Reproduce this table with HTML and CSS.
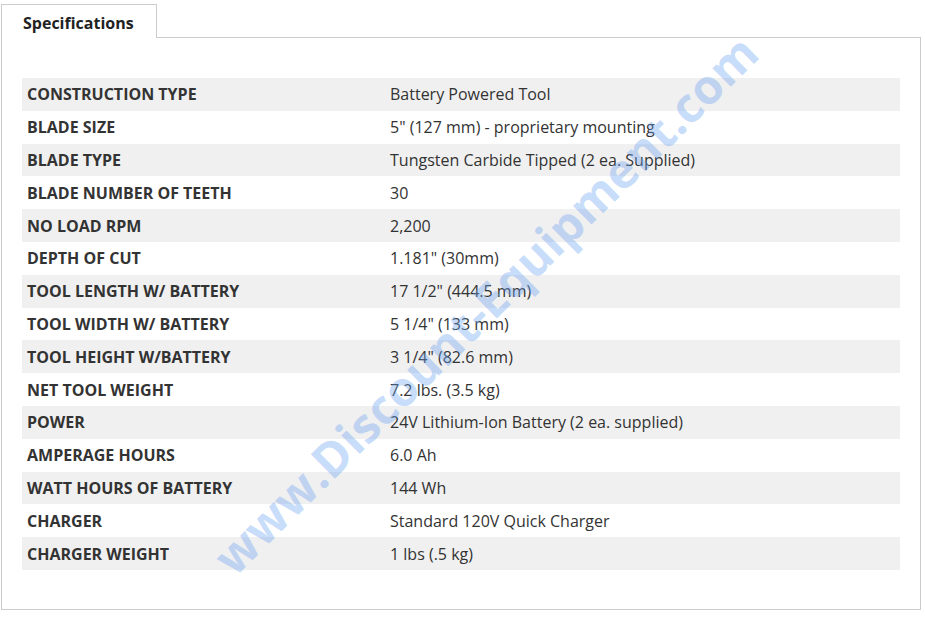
FILE: index.html
```html
<!DOCTYPE html>
<html>
<head>
<meta charset="utf-8">
<link rel="stylesheet" href="styles.css">
</head>
<body>
<div class="wrap">
  <div class="tab">Specifications</div>
  <div class="panel">
    <table class="specs">
      <tr><td class="k">CONSTRUCTION TYPE</td><td class="v">Battery Powered Tool</td></tr>
      <tr><td class="k">BLADE SIZE</td><td class="v">5" (127 mm) - proprietary mounting</td></tr>
      <tr><td class="k">BLADE TYPE</td><td class="v">Tungsten Carbide Tipped (2 ea. Supplied)</td></tr>
      <tr><td class="k">BLADE NUMBER OF TEETH</td><td class="v">30</td></tr>
      <tr><td class="k">NO LOAD RPM</td><td class="v">2,200</td></tr>
      <tr><td class="k">DEPTH OF CUT</td><td class="v">1.181" (30mm)</td></tr>
      <tr><td class="k">TOOL LENGTH W/ BATTERY</td><td class="v">17 1/2" (444.5 mm)</td></tr>
      <tr><td class="k">TOOL WIDTH W/ BATTERY</td><td class="v">5 1/4" (133 mm)</td></tr>
      <tr><td class="k">TOOL HEIGHT W/BATTERY</td><td class="v">3 1/4" (82.6 mm)</td></tr>
      <tr><td class="k">NET TOOL WEIGHT</td><td class="v">7.2 lbs. (3.5 kg)</td></tr>
      <tr><td class="k">POWER</td><td class="v">24V Lithium-Ion Battery (2 ea. supplied)</td></tr>
      <tr><td class="k">AMPERAGE HOURS</td><td class="v">6.0 Ah</td></tr>
      <tr><td class="k">WATT HOURS OF BATTERY</td><td class="v">144 Wh</td></tr>
      <tr><td class="k">CHARGER</td><td class="v">Standard 120V Quick Charger</td></tr>
      <tr><td class="k">CHARGER WEIGHT</td><td class="v">1 lbs (.5 kg)</td></tr>
    </table>
  </div>
  <div class="watermark">www.Discount-Equipment.com</div>
</div>
</body>
</html>
```
FILE: styles.css
```css
html, body {
  margin: 0;
  padding: 0;
  background: #fff;
}
body {
  font-family: "Open Sans", "Liberation Sans", sans-serif;
  color: #333;
}
.wrap {
  position: relative;
  width: 925px;
  height: 617px;
  padding-top: 4px;
  box-sizing: border-box;
}
.tab {
  position: relative;
  z-index: 1;
  margin-left: 1px;
  width: 133px;
  height: 32px;
  border: 1px solid #ccc;
  border-bottom: none;
  background: #fff;
  font-weight: 700;
  font-size: 16px;
  line-height: 36px;
  padding-left: 21px;
  padding-bottom: 1px;
  margin-bottom: -1px;
  box-sizing: content-box;
  color: #222;
}
.panel {
  margin-left: 1px;
  width: 920px;
  border: 1px solid #ccc;
  padding: 40px 0 39px 20px;
  box-sizing: border-box;
}
.specs {
  width: 878px;
  border-collapse: collapse;
  font-size: 16px;
}
.specs td {
  height: 32.8px;
  padding: 0 5px;
  vertical-align: middle;
  line-height: 20px;
}
.specs tr:nth-child(odd) td {
  background: #f0f0f0;
}
.specs .k {
  width: 353px;
  font-weight: 700;
  color: #333;
}
.specs .v {
  color: #333;
}
.watermark {
  position: absolute;
  left: 485px;
  top: 304px;
  transform: translate(-50%, -50%) rotate(-44.7deg);
  white-space: nowrap;
  font-family: "Open Sans", "DejaVu Sans", sans-serif;
  font-weight: 700;
  font-size: 48px;
  color: rgba(110, 165, 240, 0.38);
  pointer-events: none;
}
```
